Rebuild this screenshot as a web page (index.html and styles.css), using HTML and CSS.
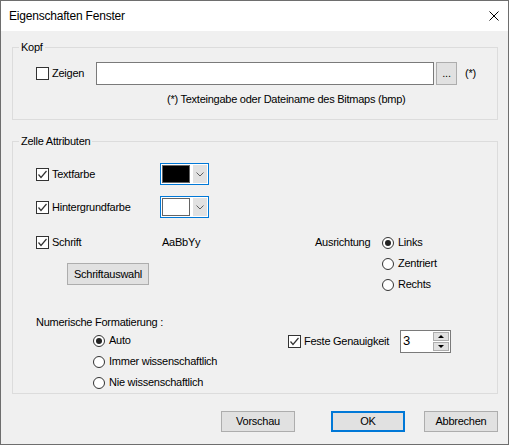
FILE: index.html
```html
<!DOCTYPE html>
<html lang="de">
<head>
    <meta charset="UTF-8">
    <title>Eigenschaften Fenster</title>
    <link rel="stylesheet" href="styles.css">
</head>
<body>
    <div class="window">
        <div class="titlebar">
            <span class="title">Eigenschaften Fenster</span>
            <svg class="close" width="10" height="10" viewBox="0 0 10 10">
                <path d="M0.5 0.5 L9.5 9.5 M9.5 0.5 L0.5 9.5" stroke="#000" stroke-width="1" fill="none"/>
            </svg>
        </div>

        <div class="content">
            <fieldset class="group group-head">
                <legend>Kopf</legend>
                <div class="head-row">
                    <label class="check check-show"><span class="box"></span>Zeigen</label>
                    <input class="textbox" type="text">
                    <button class="btn btn-browse">...</button>
                    <span class="hint-mark">(*)</span>
                </div>
                <div class="hint">(*) Texteingabe oder Dateiname des Bitmaps (bmp)</div>
            </fieldset>

            <fieldset class="group group-cell">
                <legend>Zelle Attributen</legend>
                <div class="cell-body">
                    <div class="color-row">
                        <label class="check"><span class="box checked"><svg width="11" height="11" viewBox="0 0 11 11"><polyline points="1.5,5.5 4,8.5 9.5,2" /></svg></span>Textfarbe</label>
                        <div class="combo">
                            <span class="swatch swatch-black"></span>
                            <span class="drop"><svg width="8" height="5" viewBox="0 0 8 5"><polyline points="0.5,0.5 4,4 7.5,0.5" /></svg></span>
                        </div>
                    </div>
                    <div class="color-row">
                        <label class="check"><span class="box checked"><svg width="11" height="11" viewBox="0 0 11 11"><polyline points="1.5,5.5 4,8.5 9.5,2" /></svg></span>Hintergrundfarbe</label>
                        <div class="combo">
                            <span class="swatch"></span>
                            <span class="drop"><svg width="8" height="5" viewBox="0 0 8 5"><polyline points="0.5,0.5 4,4 7.5,0.5" /></svg></span>
                        </div>
                    </div>

                    <div class="font-block">
                        <div class="font-left">
                            <div class="font-row">
                                <label class="check"><span class="box checked"><svg width="11" height="11" viewBox="0 0 11 11"><polyline points="1.5,5.5 4,8.5 9.5,2" /></svg></span>Schrift</label>
                                <span class="sample">AaBbYy</span>
                            </div>
                            <button class="btn btn-font">Schriftauswahl</button>
                        </div>
                        <div class="align">
                            <span class="align-label">Ausrichtung</span>
                            <div class="radio-list">
                                <label class="radio"><span class="dot on"></span>Links</label>
                                <label class="radio"><span class="dot"></span>Zentriert</label>
                                <label class="radio"><span class="dot"></span>Rechts</label>
                            </div>
                        </div>
                    </div>

                    <div class="number-block">
                        <div class="number-left">
                            <div class="number-label">Numerische Formatierung :</div>
                            <div class="radio-list">
                                <label class="radio"><span class="dot on"></span>Auto</label>
                                <label class="radio"><span class="dot"></span>Immer wissenschaftlich</label>
                                <label class="radio"><span class="dot"></span>Nie wissenschaftlich</label>
                            </div>
                        </div>
                        <div class="precision">
                            <label class="check"><span class="box checked"><svg width="11" height="11" viewBox="0 0 11 11"><polyline points="1.5,5.5 4,8.5 9.5,2" /></svg></span>Feste Genauigkeit</label>
                            <div class="spin">
                                <span class="spin-value">3</span>
                                <div class="spin-buttons">
                                    <span class="spin-btn"><span class="arrow-up"></span></span>
                                    <span class="spin-btn"><span class="arrow-down"></span></span>
                                </div>
                            </div>
                        </div>
                    </div>
                </div>
            </fieldset>
        </div>

        <div class="footer">
            <button class="btn btn-preview">Vorschau</button>
            <button class="btn btn-ok">OK</button>
            <button class="btn">Abbrechen</button>
        </div>
    </div>
</body>
</html>
```

FILE: styles.css
```css
* {
    box-sizing: border-box;
}

body {
    margin: 0;
    font-family: "Liberation Sans", Arial, sans-serif;
    font-size: 11px;
    line-height: 13px;
    letter-spacing: -0.25px;
    color: #000;
    background: #fff;
}

.window {
    width: 509px;
    height: 445px;
    border: 1px solid #6e6e6e;
    background: #f0f0f0;
    display: flex;
    flex-direction: column;
}

/* title bar */
.titlebar {
    height: 30px;
    background: #fff;
    display: flex;
    align-items: center;
    justify-content: space-between;
    padding: 0 9px 0 8px;
}

.title {
    font-size: 12px;
    line-height: 14px;
    letter-spacing: -0.2px;
}

.content {
    padding: 0 10px 0 11px;
}

/* group boxes */
.group {
    margin: 0;
    padding: 0;
    min-width: 0;
    border: 1px solid #dcdcdc;
}

.group legend {
    margin-left: 6px;
    padding: 0 2px;
    line-height: 13px;
}

.group-head {
    margin-top: 10px;
    padding-bottom: 13px;
}

.group-cell {
    margin-top: 15px;
}

.head-row {
    display: flex;
    align-items: center;
    height: 23px;
    margin-top: 8px;
    padding-left: 23px;
}

.check-show {
    width: 60px;
}

.textbox {
    width: 338px;
    height: 23px;
    margin: 0;
    border: 1px solid #7a7a7a;
    background: #fff;
    outline: none;
}

.hint-mark {
    margin-left: 8px;
}

.hint {
    margin-top: 8px;
    padding-left: 154px;
}

/* checkboxes and radios */
.check,
.radio {
    display: flex;
    align-items: center;
    height: 13px;
    white-space: nowrap;
}

.check {
    gap: 3px;
}

.radio {
    gap: 4px;
}

.box {
    width: 13px;
    height: 13px;
    flex: none;
    border: 1px solid #333;
    background: #fff;
    display: flex;
    align-items: center;
    justify-content: center;
}

.box polyline {
    fill: none;
    stroke: #333;
    stroke-width: 1.2;
}

.dot {
    width: 12px;
    height: 12px;
    flex: none;
    border: 1px solid #333;
    border-radius: 50%;
    background: #fff;
    display: flex;
    align-items: center;
    justify-content: center;
}

.dot.on::after {
    content: "";
    width: 6px;
    height: 6px;
    border-radius: 50%;
    background: #222;
}

.radio-list {
    display: flex;
    flex-direction: column;
    gap: 8px;
}

/* cell attributes */
.cell-body {
    padding: 15px 0 4px 23px;
}

.color-row {
    display: flex;
    align-items: center;
    height: 22px;
}

.color-row + .color-row {
    margin-top: 11px;
}

.color-row .check {
    width: 124px;
}

.combo {
    width: 49px;
    height: 22px;
    border: 1px solid #0078d7;
    background: #fff;
    padding: 1px;
    display: flex;
    align-items: center;
    gap: 3px;
}

.swatch {
    width: 28px;
    height: 18px;
    border: 1px solid #646464;
    background: #fff;
}

.swatch-black {
    background: #000;
}

.drop {
    width: 14px;
    height: 18px;
    background: #e1e1e1;
    display: flex;
    align-items: center;
    justify-content: center;
}

.drop polyline {
    fill: none;
    stroke: #606060;
    stroke-width: 1;
}

.font-block {
    display: flex;
    margin-top: 18px;
}

.font-left {
    width: 279px;
}

.font-row {
    display: flex;
    align-items: center;
    height: 13px;
}

.font-row .check {
    width: 126px;
}

.align {
    display: flex;
}

.align-label {
    width: 67px;
}

.number-block {
    display: flex;
    margin-top: 25px;
}

.number-left {
    width: 252px;
}

.number-left .radio-list {
    margin: 5px 0 0 57px;
}

.precision {
    display: flex;
    align-items: center;
    height: 23px;
    margin-top: 14px;
}

.precision .check {
    width: 112px;
}

/* spin box */
.spin {
    width: 51px;
    height: 23px;
    border: 1px solid #7a7a7a;
    background: #fff;
    display: flex;
    justify-content: space-between;
}

.spin-value {
    padding: 2px 0 0 2px;
    font-size: 13px;
    line-height: 15px;
}

.spin-buttons {
    display: flex;
    flex-direction: column;
    gap: 1px;
    padding: 1px 1px 1px 0;
}

.spin-btn {
    width: 16px;
    flex: 1;
    background: #e1e1e1;
    border: 1px solid #adadad;
    display: flex;
    align-items: center;
    justify-content: center;
}

.arrow-up {
    border-left: 3px solid transparent;
    border-right: 3px solid transparent;
    border-bottom: 3px solid #000;
}

.arrow-down {
    border-left: 3px solid transparent;
    border-right: 3px solid transparent;
    border-top: 3px solid #000;
}

/* buttons */
.btn {
    height: 21px;
    width: 74px;
    margin: 0;
    padding: 0;
    border: 1px solid #adadad;
    background: #e1e1e1;
    font: inherit;
    letter-spacing: inherit;
    color: #000;
}

.btn-browse {
    width: 21px;
    height: 23px;
    margin-left: 2px;
}

.btn-font {
    width: 82px;
    height: 22px;
    margin: 14px 0 0 31px;
}

.footer {
    margin-top: auto;
    display: flex;
    justify-content: flex-end;
    padding: 0 10px 12px 0;
}

.btn-preview {
    margin-right: 36px;
}

.btn-ok {
    border: 2px solid #0078d7;
    margin-right: 19px;
}
```
